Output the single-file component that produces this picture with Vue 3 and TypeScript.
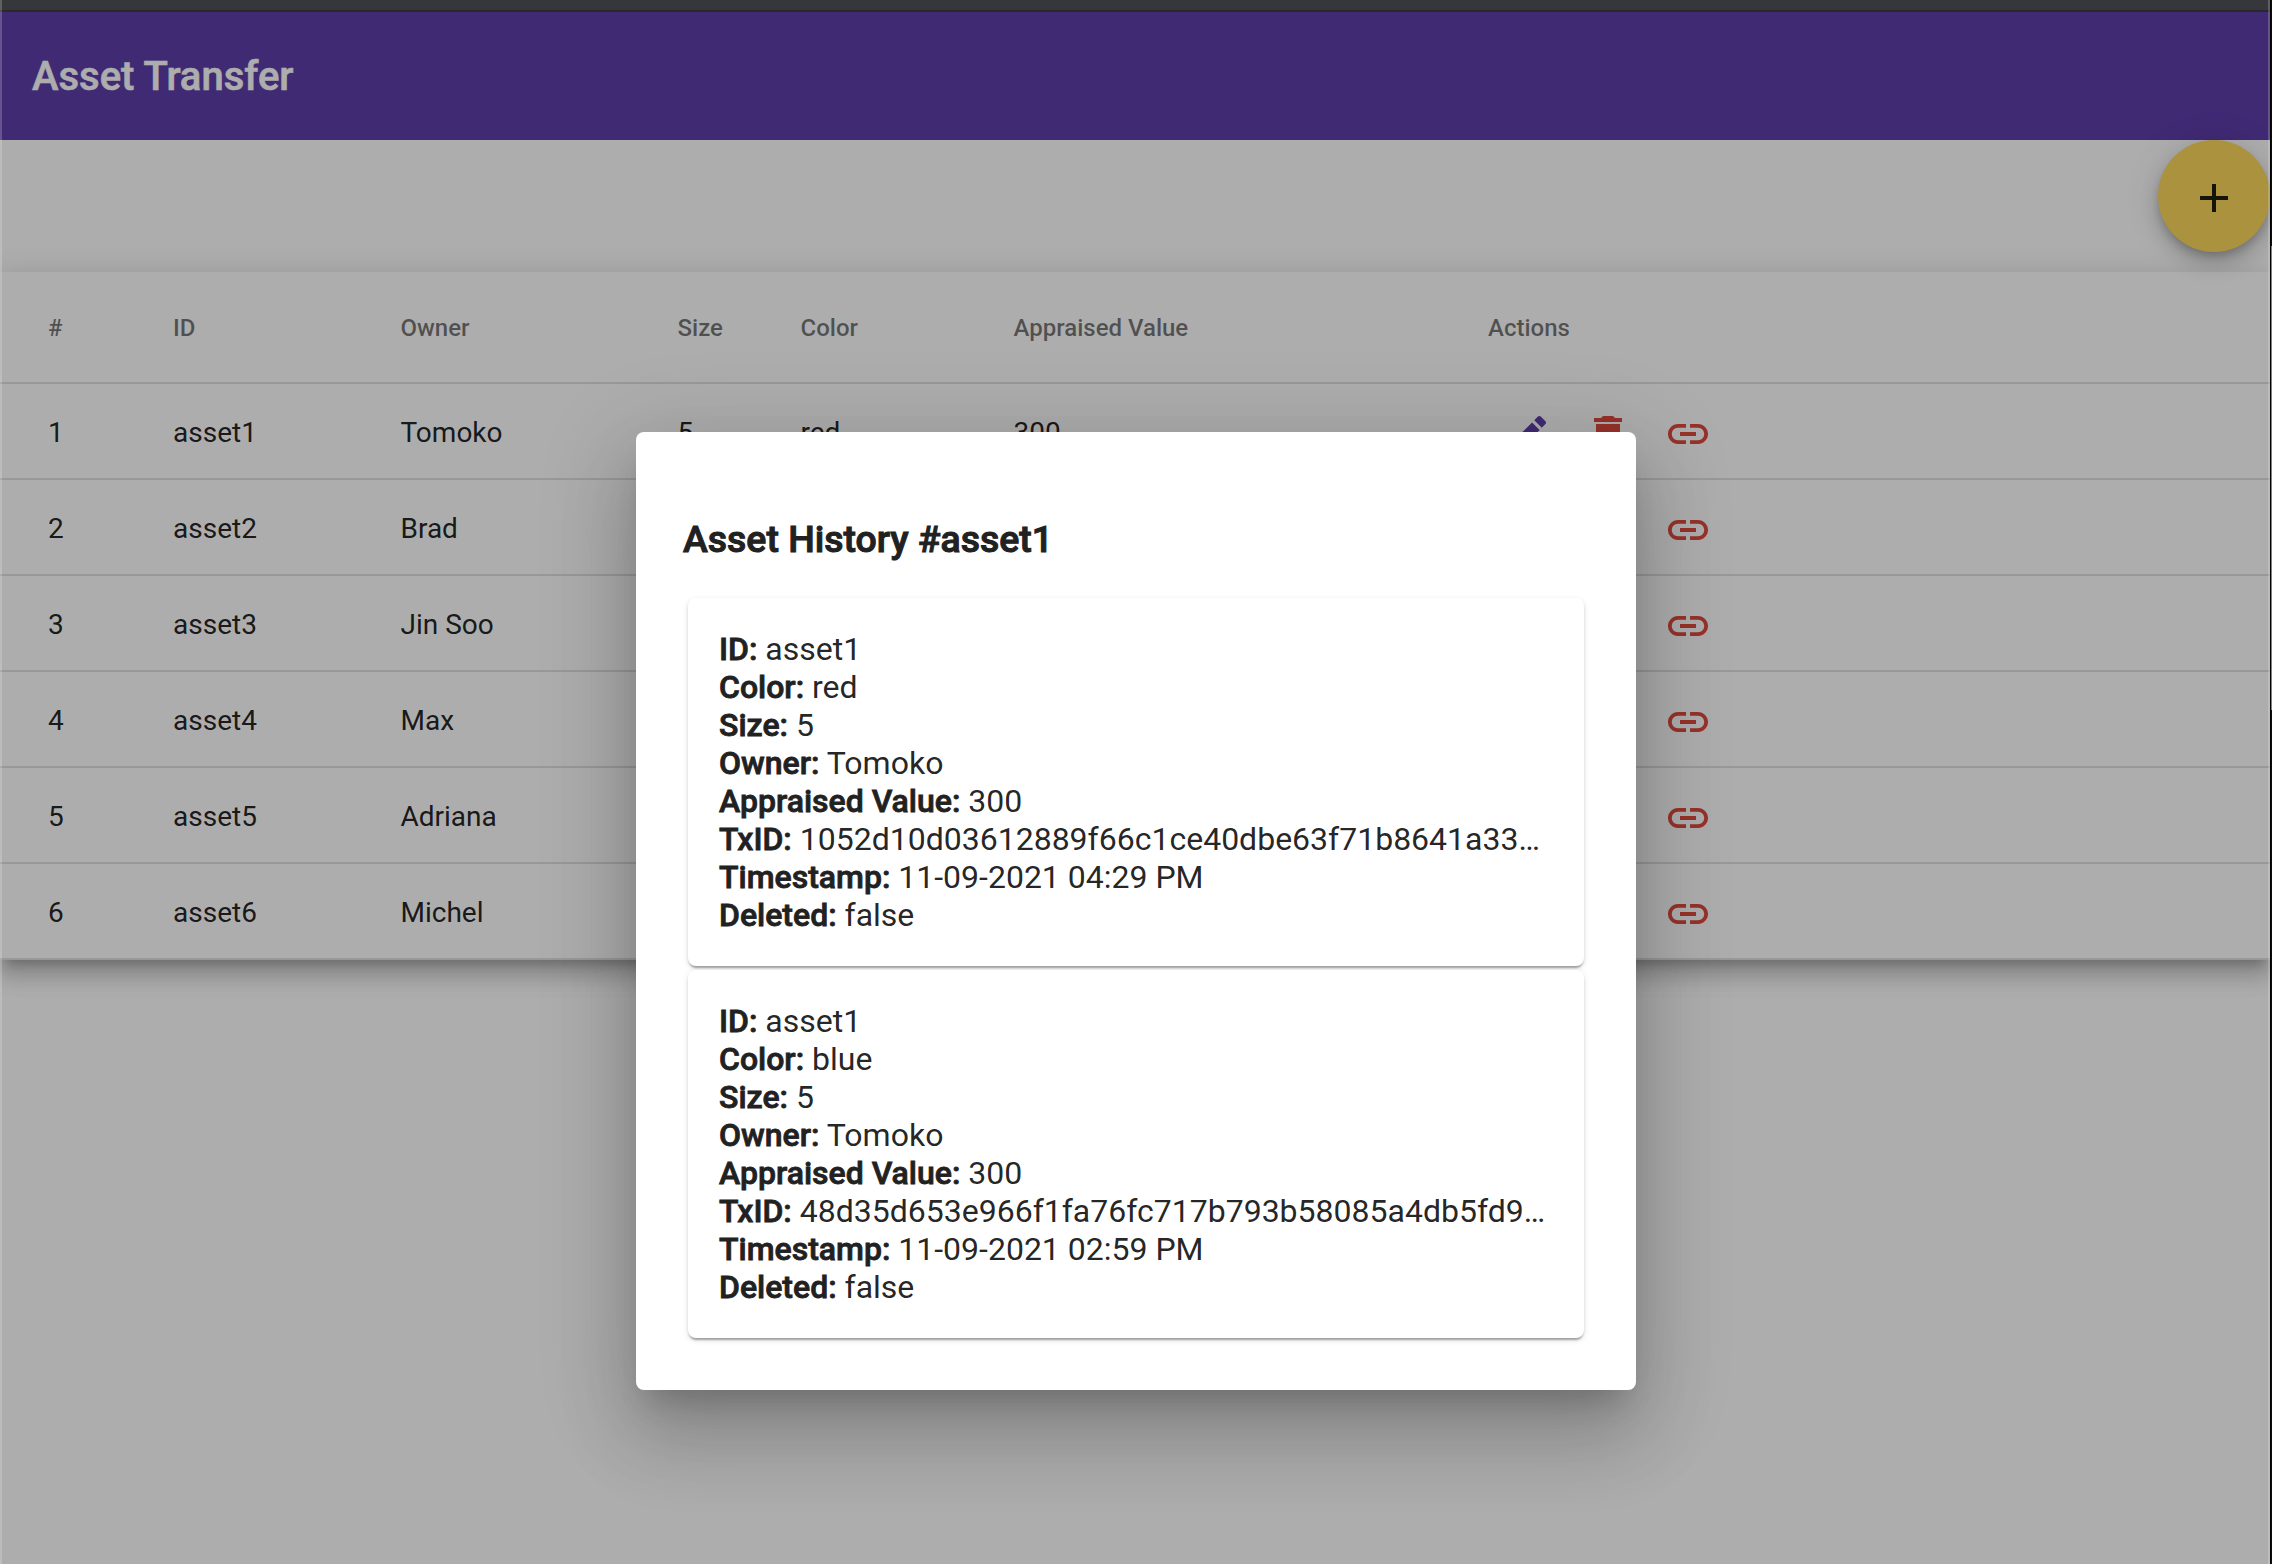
<script setup lang="ts">
interface Asset {
  id: string
  owner: string
  size?: number
  color?: string
  value?: number
}

interface HistoryEntry {
  label: string
  value: string
}

const columns: string[] = ['#', 'ID', 'Owner', 'Size', 'Color', 'Appraised Value', 'Actions']

const assets: Asset[] = [
  { id: 'asset1', owner: 'Tomoko', size: 5, color: 'red', value: 300 },
  { id: 'asset2', owner: 'Brad' },
  { id: 'asset3', owner: 'Jin Soo' },
  { id: 'asset4', owner: 'Max' },
  { id: 'asset5', owner: 'Adriana' },
  { id: 'asset6', owner: 'Michel' },
]

function entry(color: string, tx: string, time: string): HistoryEntry[] {
  return [
    { label: 'ID:', value: 'asset1' },
    { label: 'Color:', value: color },
    { label: 'Size:', value: '5' },
    { label: 'Owner:', value: 'Tomoko' },
    { label: 'Appraised Value:', value: '300' },
    { label: 'TxID:', value: tx },
    { label: 'Timestamp:', value: time },
    { label: 'Deleted:', value: 'false' },
  ]
}

const history: HistoryEntry[][] = [
  entry('red', '1052d10d03612889f66c1ce40dbe63f71b8641a33…', '11-09-2021 04:29 PM'),
  entry('blue', '48d35d653e966f1fa76fc717b793b58085a4db5fd9…', '11-09-2021 02:59 PM'),
]
</script>

<template>
  <div class="window">
    <div class="chrome"></div>
    <div class="page">
      <header class="toolbar"><span>Asset Transfer</span></header>
      <div class="fab-row">
        <button class="fab" aria-label="Add">
          <svg viewBox="0 0 24 24"><path d="M19 13h-6v6h-2v-6H5v-2h6V5h2v6h6v2z" /></svg>
        </button>
      </div>
      <div class="table">
        <div class="row head">
          <div v-for="c in columns" :key="c" class="cell">{{ c }}</div>
        </div>
        <div v-for="(a, i) in assets" :key="a.id" class="row">
          <div class="cell">{{ i + 1 }}</div>
          <div class="cell">{{ a.id }}</div>
          <div class="cell">{{ a.owner }}</div>
          <div class="cell">{{ a.size }}</div>
          <div class="cell">{{ a.color }}</div>
          <div class="cell">{{ a.value }}</div>
          <div class="cell actions">
            <svg class="primary" viewBox="0 0 24 24">
              <path d="M3 17.25V21h3.75L17.81 9.94l-3.75-3.75L3 17.25zM20.71 7.04c.39-.39.39-1.02 0-1.41l-2.34-2.34c-.39-.39-1.02-.39-1.41 0l-1.83 1.83 3.75 3.75 1.83-1.83z" />
            </svg>
            <svg class="warn" viewBox="0 0 24 24">
              <path d="M6 19c0 1.1.9 2 2 2h8c1.1 0 2-.9 2-2V7H6v12zM19 4h-3.5l-1-1h-5l-1 1H5v2h14V4z" />
            </svg>
            <svg class="warn" viewBox="0 0 24 24">
              <path d="M3.9 12c0-1.71 1.39-3.1 3.1-3.1h4V7H7c-2.76 0-5 2.24-5 5s2.24 5 5 5h4v-1.9H7c-1.71 0-3.1-1.39-3.1-3.1zM8 13h8v-2H8v2zm9-6h-4v1.9h4c1.71 0 3.1 1.39 3.1 3.1s-1.39 3.1-3.1 3.1h-4V17h4c2.76 0 5-2.24 5-5s-2.24-5-5-5z" />
            </svg>
          </div>
        </div>
      </div>
      <div class="backdrop">
        <section class="dialog" role="dialog">
          <h3>Asset History #asset1</h3>
          <div class="cards">
            <article v-for="(card, i) in history" :key="i" class="card">
              <div v-for="line in card" :key="line.label" class="line">
                <b>{{ line.label }}</b> {{ line.value }}
              </div>
            </article>
          </div>
        </section>
      </div>
    </div>
    <div class="frame"></div>
  </div>
</template>

<style>
body {
  margin: 0;
  background: #000;
}
</style>

<style scoped>
.window {
  position: relative;
  width: 2272px;
  height: 1564px;
  overflow: hidden;
  background: linear-gradient(90deg, #000 2271px, transparent 2271px),
    linear-gradient(#08100f 246px, #7c8a5c 246px, #7c8a5c 710px, #06100f 710px);
  font-family: Roboto, sans-serif;
  color: rgba(0, 0, 0, 0.87);
}
.chrome {
  box-sizing: border-box;
  width: 2270px;
  height: 12px;
  background: #36373a;
  border-bottom: 2px solid #29292b;
}
.page {
  position: relative;
  width: 2270px;
  height: 1552px;
  overflow: hidden;
  background: #fff;
}
.toolbar {
  display: flex;
  align-items: center;
  height: 128px;
  padding: 0 32px;
  background: #603eac;
  color: #fff;
  font-size: 40px;
  font-weight: 500;
  -webkit-text-stroke: 0.6px currentColor;
}
.fab-row {
  display: flex;
  justify-content: flex-end;
  height: 132px;
}
.fab {
  position: relative;
  z-index: 1;
  display: flex;
  align-items: center;
  justify-content: center;
  width: 112px;
  height: 112px;
  padding: 4px 0 0;
  border: 0;
  border-radius: 50%;
  background: #fbd75e;
  box-shadow: 0 6px 10px -2px rgba(0, 0, 0, 0.2), 0 12px 20px rgba(0, 0, 0, 0.14), 0 2px 36px rgba(0, 0, 0, 0.12);
}
.fab svg {
  width: 48px;
  height: 48px;
  fill: rgba(0, 0, 0, 0.87);
}
.table {
  box-shadow: 0 10px 10px -6px rgba(0, 0, 0, 0.2), 0 16px 20px 2px rgba(0, 0, 0, 0.14), 0 6px 28px 4px rgba(0, 0, 0, 0.12);
  position: relative;
  background: #fff;
}
.row {
  display: grid;
  grid-template-columns: 125px 227.5px 277px 123px 213px 474.5px 1fr;
  align-items: center;
  box-sizing: border-box;
  height: 96px;
  padding: 2px 0 0 48px;
  border-bottom: 2px solid rgba(0, 0, 0, 0.12);
  font-size: 28px;
}
.head {
  height: 112px;
  font-size: 24px;
  font-weight: 500;
  color: rgba(0, 0, 0, 0.54);
}
.actions {
  display: flex;
  gap: 32px;
  padding: 4px 0 0 16px;
}
.actions svg {
  width: 48px;
  height: 48px;
}
.primary {
  fill: #603eac;
}
.warn {
  fill: #de4b3e;
}
.backdrop {
  position: absolute;
  inset: 0;
  z-index: 2;
  display: flex;
  align-items: flex-start;
  justify-content: center;
  padding-top: 420px;
  background: rgba(0, 0, 0, 0.32);
}
.dialog {
  box-sizing: border-box;
  width: 1000px;
  height: 958px;
  margin-left: 2px;
  padding: 84px 48px 48px;
  border-radius: 8px;
  background: #fff;
  box-shadow: 0 22px 30px -14px rgba(0, 0, 0, 0.2), 0 48px 76px 6px rgba(0, 0, 0, 0.14), 0 18px 92px 16px rgba(0, 0, 0, 0.12);
}
h3 {
  margin: 0 0 0 -1px;
  line-height: 46px;
  font-size: 37.44px;
  font-weight: 500;
  -webkit-text-stroke: 1px #212121;
  color: #212121;
}
.cards {
  display: flex;
  flex-direction: column;
  gap: 4px;
  margin: 36px 4px 0;
}
.card {
  padding: 32px 32px 32px 31px;
  border-radius: 8px;
  background: #fff;
  box-shadow: 0 4px 2px -2px rgba(0, 0, 0, 0.2), 0 2px 2px rgba(0, 0, 0, 0.14), 0 2px 6px rgba(0, 0, 0, 0.12);
}
.line {
  height: 38px;
  line-height: 38px;
  font-size: 32px;
  white-space: nowrap;
}
.line b {
  font-weight: 500;
  color: #212121;
  -webkit-text-stroke: 0.8px #212121;
}
.frame {
  position: absolute;
  inset: 0 2px 0 0;
  z-index: 3;
  box-sizing: border-box;
  border: 2px solid rgba(255, 255, 255, 0.2);
  border-width: 0 2px;
}
</style>
